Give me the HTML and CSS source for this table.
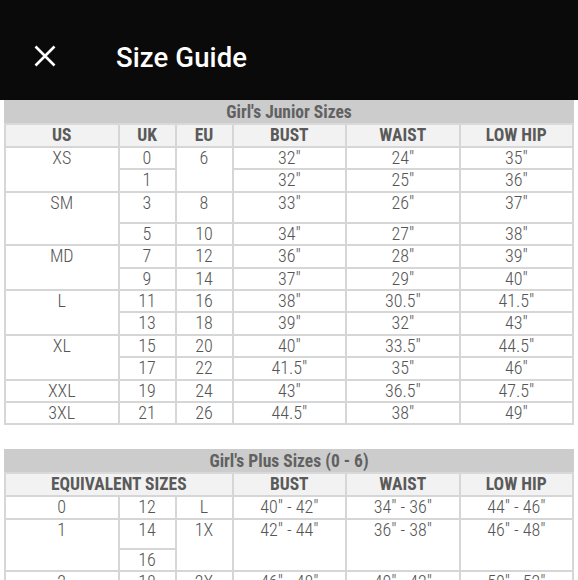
FILE: index.html
```html
<!DOCTYPE html>
<html>
<head>
<meta charset="utf-8">
<link rel="stylesheet" href="styles.css">
</head>
<body>
<header class="topbar">
  <svg class="close" width="22" height="22" viewBox="0 0 22 22" aria-hidden="true">
    <path d="M1.5 1.5 L20.5 20.5 M20.5 1.5 L1.5 20.5" stroke="#fff" stroke-width="2.6" fill="none"/>
  </svg>
  <h1 class="title">Size Guide</h1>
</header>
<main class="content">
  <table class="size-table">
    <colgroup>
      <col class="c-wide"><col class="c-narrow"><col class="c-narrow"><col class="c-wide"><col class="c-wide"><col class="c-wide">
    </colgroup>
    <tr class="cap"><th colspan="6">Girl's Junior Sizes</th></tr>
    <tr class="head"><th>US</th><th>UK</th><th>EU</th><th>BUST</th><th>WAIST</th><th>LOW HIP</th></tr>
    <tr><td rowspan="2">XS</td><td>0</td><td rowspan="2">6</td><td>32"</td><td>24"</td><td>35"</td></tr>
    <tr><td>1</td><td>32"</td><td>25"</td><td>36"</td></tr>
    <tr class="tall"><td rowspan="2">SM</td><td>3</td><td>8</td><td>33"</td><td>26"</td><td>37"</td></tr>
    <tr><td>5</td><td>10</td><td>34"</td><td>27"</td><td>38"</td></tr>
    <tr><td rowspan="2">MD</td><td>7</td><td>12</td><td>36"</td><td>28"</td><td>39"</td></tr>
    <tr><td>9</td><td>14</td><td>37"</td><td>29"</td><td>40"</td></tr>
    <tr><td rowspan="2">L</td><td>11</td><td>16</td><td>38"</td><td>30.5"</td><td>41.5"</td></tr>
    <tr><td>13</td><td>18</td><td>39"</td><td>32"</td><td>43"</td></tr>
    <tr><td rowspan="2">XL</td><td>15</td><td>20</td><td>40"</td><td>33.5"</td><td>44.5"</td></tr>
    <tr><td>17</td><td>22</td><td>41.5"</td><td>35"</td><td>46"</td></tr>
    <tr><td>XXL</td><td>19</td><td>24</td><td>43"</td><td>36.5"</td><td>47.5"</td></tr>
    <tr><td>3XL</td><td>21</td><td>26</td><td>44.5"</td><td>38"</td><td>49"</td></tr>
  </table>

  <table class="size-table">
    <colgroup>
      <col class="c-wide"><col class="c-narrow"><col class="c-narrow"><col class="c-wide"><col class="c-wide"><col class="c-wide">
    </colgroup>
    <tr class="cap"><th colspan="6">Girl's Plus Sizes (0 - 6)</th></tr>
    <tr class="head"><th colspan="3">EQUIVALENT SIZES</th><th>BUST</th><th>WAIST</th><th>LOW HIP</th></tr>
    <tr><td>0</td><td>12</td><td>L</td><td>40" - 42"</td><td>34" - 36"</td><td>44" - 46"</td></tr>
    <tr class="tall2"><td rowspan="2">1</td><td>14</td><td rowspan="2">1X</td><td rowspan="2">42" - 44"</td><td rowspan="2">36" - 38"</td><td rowspan="2">46" - 48"</td></tr>
    <tr><td>16</td></tr>
    <tr><td>2</td><td>18</td><td>2X</td><td>46" - 48"</td><td>40" - 42"</td><td>50" - 52"</td></tr>
  </table>
</main>
</body>
</html>
```
FILE: styles.css
```css
html, body {
  margin: 0;
  padding: 0;
  background: #ffffff;
}

body {
  width: 578px;
  height: 580px;
  overflow: hidden;
  font-family: "Roboto Condensed", Roboto, "Liberation Sans Narrow", sans-serif;
}

.topbar {
  height: 100px;
  background: #0a0a0a;
  display: flex;
  align-items: center;
  box-sizing: border-box;
  padding-left: 34px;
  padding-top: 11px;
}

.close {
  display: block;
  flex: none;
}

.title {
  margin: 0 0 0 60px;
  font-family: Roboto, "Liberation Sans", sans-serif;
  font-weight: 500;
  font-size: 27.5px;
  color: #ffffff;
  letter-spacing: 0.1px;
  line-height: 1;
  position: relative;
  top: 2px;
}

.content {
  padding: 0 4px 0 4px;
}

.size-table {
  width: 570px;
  border-collapse: collapse;
  table-layout: fixed;
  color: #5a5a5a;
  margin-bottom: 24px;
}

.c-wide { width: 113.5px; }
.c-narrow { width: 57px; }

.size-table th,
.size-table td {
  border: 2px solid #d6d6d6;
  padding: 0;
  text-align: center;
  vertical-align: top;
  height: 20.4px;
  line-height: 20.4px;
  white-space: nowrap;
  overflow: hidden;
}

.size-table td {
  font-size: 18px;
  font-weight: 300;
  color: #555555;
}

.size-table th {
  font-size: 17.5px;
  font-weight: 700;
  color: #5a5a5a;
}

.cap th {
  background: #cccccc;
  border-color: #cccccc #cccccc #d9d9d9 #cccccc;
  height: 20px;
  line-height: 21px;
  color: #616161;
}

.head th {
  background: #f2f2f2;
  height: 20px;
  line-height: 21px;
}

.tall td {
  height: 29px;
}

.tall2 td {
  height: 28px;
}
```
